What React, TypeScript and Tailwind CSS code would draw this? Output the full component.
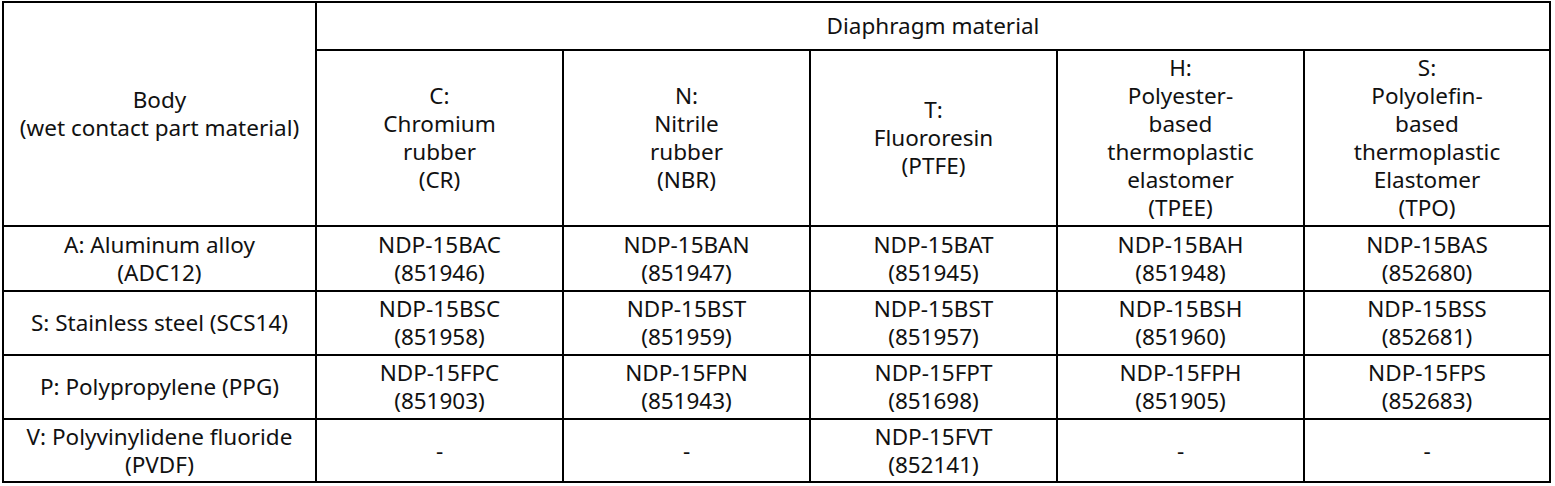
import React from 'react'

type Row = { body: string[]; cells: string[][] }

const headers: string[][] = [
    ['C:', 'Chromium', 'rubber', '(CR)'],
    ['N:', 'Nitrile', 'rubber', '(NBR)'],
    ['T:', 'Fluororesin', '(PTFE)'],
    ['H:', 'Polyester-', 'based', 'thermoplastic', 'elastomer', '(TPEE)'],
    ['S:', 'Polyolefin-', 'based', 'thermoplastic', 'Elastomer', '(TPO)'],
]

const rows: Row[] = [
    {
        body: ['A: Aluminum alloy', '(ADC12)'],
        cells: [
            ['NDP-15BAC', '(851946)'],
            ['NDP-15BAN', '(851947)'],
            ['NDP-15BAT', '(851945)'],
            ['NDP-15BAH', '(851948)'],
            ['NDP-15BAS', '(852680)'],
        ],
    },
    {
        body: ['S: Stainless steel (SCS14)'],
        cells: [
            ['NDP-15BSC', '(851958)'],
            ['NDP-15BST', '(851959)'],
            ['NDP-15BST', '(851957)'],
            ['NDP-15BSH', '(851960)'],
            ['NDP-15BSS', '(852681)'],
        ],
    },
    {
        body: ['P: Polypropylene (PPG)'],
        cells: [
            ['NDP-15FPC', '(851903)'],
            ['NDP-15FPN', '(851943)'],
            ['NDP-15FPT', '(851698)'],
            ['NDP-15FPH', '(851905)'],
            ['NDP-15FPS', '(852683)'],
        ],
    },
    {
        body: ['V: Polyvinylidene fluoride', '(PVDF)'],
        cells: [['-'], ['-'], ['NDP-15FVT', '(852141)'], ['-'], ['-']],
    },
]

const Cell = ({ lines, className = '' }: { lines: string[]; className?: string }) => (
    <div className={`bg-white flex flex-col items-center justify-center text-center whitespace-nowrap ${className}`}>
        {lines.map((l, i) => (
            <span key={i}>{l}</span>
        ))}
    </div>
)

export default function App() {
    return (
        <div className="w-[1555px] h-[486px] bg-white pt-px pl-[2px] font-['Noto_Sans',sans-serif] text-[22.5px] leading-[28px] text-[#111]">
            <div className="inline-grid bg-black p-[2px] gap-[2px] grid-cols-[311px_245px_245px_245px_245px_244px] grid-rows-[46px_174px_63px_62px_62px_61px]">
                <Cell lines={['Body', '(wet contact part material)']} className="row-span-2" />
                <Cell lines={['Diaphragm material']} className="col-span-5" />
                {headers.map((h, i) => (
                    <Cell key={i} lines={h} />
                ))}
                {rows.map((r, i) => (
                    <React.Fragment key={i}>
                        <Cell lines={r.body} />
                        {r.cells.map((c, j) => (
                            <Cell key={j} lines={c} />
                        ))}
                    </React.Fragment>
                ))}
            </div>
        </div>
    )
}
